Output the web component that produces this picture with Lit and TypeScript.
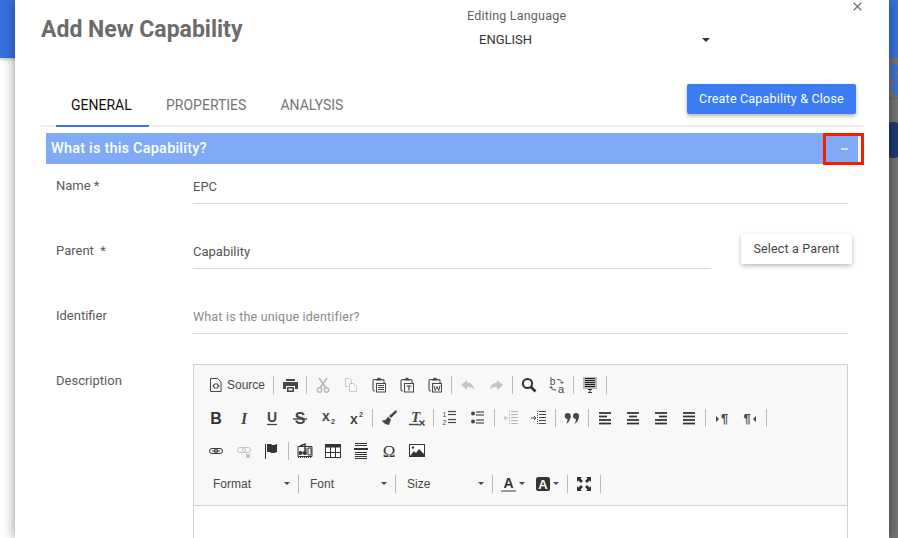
import { LitElement, html, css, svg } from "lit";
import { customElement } from "lit/decorators.js";

const D = "#474747";
const G = "#b9b9b9";
const clip = (inner: unknown) => svg`<path d="M5 2.5H3.5Q2 2.5 2 4v8.5Q2 14 3.5 14H4" fill="none" stroke="${D}" stroke-width="1.1"/><path d="M4.5 3.5V2h2V.8h3V2h2v1.5z" fill="${D}"/><path d="M11 2.5h1Q13 2.5 13 4V6" fill="none" stroke="${D}" stroke-width="1.1"/><rect x="5.5" y="6.5" width="9" height="8.5" fill="#f8f8f8" stroke="${D}"/>${inner}`;
const txt = (t: string, x: number, y: number, size: number, fam: string, extra = "", fill = D) =>
  svg`<text x="${x}" y="${y}" font-size="${size}" font-family="${fam}" text-anchor="middle" fill="${fill}" style="${extra}">${t}</text>`;
const SANS = "Liberation Sans, sans-serif";
const SERIF = "Liberation Serif, serif";
const lines = (rows: [number, number, number][], c = D, w = 2) =>
  rows.map(([x1, x2, y]) => svg`<path d="M${x1} ${y}H${x2}" stroke="${c}" stroke-width="${w}"/>`);

const ICONS: Record<string, unknown> = {
  print: svg`<path d="M4 2h9v2H4z" fill="${D}"/><path d="M1 5h15v7h-3V9H4v3H1z" fill="${D}"/><path d="M5 10h7v5H5z" fill="${D}"/><path d="M6.5 11.5h4v2h-4z" fill="#f8f8f8"/>`,
  cut: svg`<path d="M4 1l7 10M12 1L5 11" stroke="${G}" stroke-width="1.8" fill="none"/><circle cx="4.5" cy="13" r="2.2" fill="none" stroke="${G}" stroke-width="1.4"/><circle cx="11.5" cy="13" r="2.2" fill="none" stroke="${G}" stroke-width="1.4"/>`,
  copy: svg`<path d="M2.5 1.5h4l2 2v3M2.5 1.5v8h3" fill="none" stroke="#c8c8c8"/><path d="M6.5 6.5h4l3 3v5h-7z" fill="none" stroke="#c8c8c8"/>`,
  paste: clip(lines([[7, 13, 8.5], [7, 13, 10.5], [7, 13, 12.5]], D, 1)),
  pastet: clip(svg`<path d="M7.5 9h5M10 9v4.5" stroke="${D}" stroke-width="1.2" fill="none"/>`),
  pastew: clip(svg`<path d="M7 8.5l1.2 5 1.8-4 1.8 4 1.2-5" stroke="${D}" stroke-width="1" fill="none"/>`),
  undo: svg`<path d="M7 3L1 8l6 5v-3q5-.5 7 3 0-7-7-7.5z" fill="#c4c4c4"/>`,
  redo: svg`<path d="M9 3l6 5-6 5v-3q-5-.5-7 3 0-7 7-7.5z" fill="#c4c4c4"/>`,
  find: svg`<circle cx="6.5" cy="6.5" r="4.6" fill="none" stroke="#333" stroke-width="2"/><path d="M10 10l4.5 4.5" stroke="#333" stroke-width="2.6"/>`,
  replace: svg`${txt("b", 3.5, 8, 10, SANS)}${txt("a", 12, 15.5, 11, SANS)}<path d="M8 2.5q5 0 5 3.5M11.5 5l1.5 1.5L14.5 5M7 13q-5 0-5-3.5M.5 11L2 9.5 3.5 11" fill="none" stroke="${D}" stroke-width="1"/>`,
  preview: svg`<rect x="1" y="0" width="14" height="12" fill="#b8b8b8"/>${lines([[3, 13, 1.5], [3, 13, 3.5], [3, 13, 5.5], [3, 13, 7.5], [3, 13, 9.5]], "#222", 1)}<path d="M6 12.5h4M8 12.5v3M6 15.5h4" stroke="#333" stroke-width="1"/>`,
  bold: txt("B", 8, 14, 16, SANS, "font-weight:700", "#333"),
  italic: txt("I", 8, 14, 16, SERIF, "font-weight:700;font-style:italic", "#474747"),
  underline: svg`${txt("U", 8, 12, 14, SANS, "font-weight:700")}<path d="M3 14.5h10" stroke="${D}" stroke-width="1.3"/>`,
  strike: svg`${txt("S", 8, 14, 16, SANS, "font-weight:700")}<path d="M1 9h14" stroke="${D}" stroke-width="1.4"/>`,
  sub: svg`${txt("x", 6, 11, 14, SANS, "font-weight:700")}${txt("2", 13, 14, 7, SANS, "font-weight:700")}`,
  sup: svg`${txt("x", 6, 14, 14, SANS, "font-weight:700")}${txt("2", 13, 7, 7, SANS, "font-weight:700")}`,
  brush: svg`<path d="M15 0l1 2-6 6-2-2z" fill="${D}"/><path d="M7 6.5L10 9.5 8 15C5 15 1 12 1 10.5 4 10.5 6 9 7 6.5z" fill="${D}"/>`,
  clear: svg`${txt("T", 6.5, 12, 15, SERIF, "font-weight:700;font-style:italic")}<path d="M0 14.5h10" stroke="${D}" stroke-width="1.4"/><path d="M10.5 10.5l5 5M15.5 10.5l-5 5" stroke="${D}" stroke-width="1.5"/>`,
  ol: svg`${txt("1", 2.5, 6.5, 7, SANS)}${txt("2", 2.5, 14.5, 7, SANS)}${lines([[6, 14, 1.5], [6, 14, 4.5], [6, 14, 9.5], [6, 14, 12.5]], D, 1.2)}`,
  ul: svg`<circle cx="3" cy="3.5" r="2" fill="${D}"/><circle cx="3" cy="11.5" r="2" fill="${D}"/>${lines([[6, 14, 2], [6, 14, 5], [6, 14, 10], [6, 14, 13]], D, 1.2)}`,
  outdent: svg`${lines([[8, 15, 1.5], [8, 15, 4.5], [8, 15, 7.5], [8, 15, 10.5], [8, 15, 13.5]], G, 1)}<path d="M6.5 1v14" stroke="${G}" stroke-dasharray="1 1"/><path d="M1 8h4M1 8l2-2M1 8l2 2" stroke="${G}" fill="none"/>`,
  indent: svg`${lines([[8, 15, 1.5], [8, 15, 4.5], [8, 15, 7.5], [8, 15, 10.5], [8, 15, 13.5]], D, 1)}<path d="M6.5 1v14" stroke="${D}" stroke-dasharray="1 1"/><path d="M0 8h5M5 8L3 6M5 8l-2 2" stroke="${D}" fill="none"/>`,
  quote: svg`<circle cx="3.7" cy="6" r="3" fill="${D}"/><path d="M6.6 6q0 5-4.6 8 2-3 1.5-6z" fill="${D}"/><circle cx="12" cy="6" r="3" fill="${D}"/><path d="M15 6q0 5-4.6 8 2-3 1.5-6z" fill="${D}"/>`,
  left: lines([[2, 14, 3], [2, 10, 6.5], [2, 14, 10], [2, 14, 13.5]], "#333", 1.8),
  center: lines([[2, 14, 3], [4, 12, 6.5], [2, 14, 10], [2, 14, 13.5]], "#333", 1.8),
  right: lines([[2, 14, 3], [6, 14, 6.5], [2, 14, 10], [2, 14, 13.5]], "#333", 1.8),
  justify: lines([[2, 14, 3], [2, 14, 6.5], [2, 14, 10], [2, 14, 13.5]], "#333", 1.8),
  ltr: svg`<path d="M2 6l3 3-3 3z" fill="${D}"/>${txt("¶", 10.5, 13, 13, SANS, "font-weight:700")}`,
  rtl: svg`${txt("¶", 5, 13, 13, SANS, "font-weight:700")}<path d="M14 6l-3 3 3 3z" fill="${D}"/>`,
  link: svg`<rect x="1.5" y="5.5" width="8" height="5" rx="2.5" fill="none" stroke="#333" stroke-width="1"/><rect x="6.5" y="5.5" width="8" height="5" rx="2.5" fill="none" stroke="#333" stroke-width="1"/><path d="M4 8h8" stroke="#333"/>`,
  unlink: svg`<rect x="1.5" y="4.5" width="8" height="5" rx="2.5" fill="none" stroke="#c4c4c4" stroke-width="1"/><rect x="6.5" y="4.5" width="8" height="5" rx="2.5" fill="none" stroke="#c4c4c4" stroke-width="1"/><path d="M10 11l4 4M14 11l-4 4" stroke="#b0b0b0" stroke-width="1.2"/>`,
  anchor: svg`<path d="M1.5 1v15" stroke="#333" stroke-width="1"/><path d="M3 1h4l1 1h2l3-1v8l-3 1H7L6 9H3z" fill="#333"/>`,
  media: svg`<path d="M1 3.5h14v10H1z" fill="none" stroke="#333"/><path d="M1 14h14" stroke="#333" stroke-width="2" stroke-dasharray="1 1"/><path d="M11 5h3v7h-3zM9 5v7" stroke="#333" fill="none"/><path d="M3 3l5-2v9" stroke="#333" fill="none" stroke-width="1.4"/><circle cx="3.5" cy="10" r="2" fill="#333"/><circle cx="7.5" cy="10" r="2" fill="#333"/>`,
  table: svg`<rect x="0.5" y="1.5" width="15" height="13" fill="#fff" stroke="#333"/><path d="M0 3h16" stroke="#333" stroke-width="3"/><path d="M1 9.5h15M5.5 3v11M10.5 3v11" stroke="#333"/>`,
  hr: svg`${lines([[2, 14, 0.5], [2, 14, 2.5], [2, 14, 9.5], [2, 14, 11.5], [2, 14, 13.5], [2, 14, 15.5]], "#333", 1)}<path d="M1 6h14" stroke="#333" stroke-width="2"/>`,
  omega: txt("Ω", 8, 14, 17, SERIF, "font-weight:400", "#333"),
  image: svg`<rect x="0.5" y="1.5" width="15" height="12" fill="#fff" stroke="#333"/><circle cx="4" cy="4.5" r="1.2" fill="#333"/><path d="M1 13l4-5 2 2 3-4 5 5v2z" fill="#333"/>`,
  maximize: svg`<path d="M1 1h5L4.5 2.5 7 5 5 7 2.5 4.5 1 6zM15 1v5l-1.5-1.5L11 7 9 5l2.5-2.5L10 1zM1 15v-5l1.5 1.5L5 9l2 2-2.5 2.5L6 15zM15 15h-5l1.5-1.5L9 11l2-2 2.5 2.5L15 10z" fill="#333"/>`,
};

const ROW1 = [["print"], ["cut", "copy", "paste", "pastet", "pastew"], ["undo", "redo"], ["find", "replace"], ["preview"]];
const ROW2 = [["bold", "italic", "underline", "strike", "sub", "sup"], ["brush", "clear"], ["ol", "ul"], ["outdent", "indent"], ["quote"], ["left", "center", "right", "justify"], ["ltr", "rtl"]];
const ROW3 = [["link", "unlink", "anchor"]];
const ROW3B = ["media", "table", "hr", "omega", "image"];

@customElement("app-root")
export class AppRoot extends LitElement {
  static styles = css`
    :host { display: block; position: relative; width: 898px; height: 538px; overflow: hidden; background: #fff; font-family: Roboto, sans-serif; }
    .bar { position: absolute; left: 0; top: 0; width: 898px; height: 58px; background: #3673e0; box-shadow: 0 1px 4px rgba(0,0,0,.3); }
    .side { position: absolute; left: 889px; top: 58px; width: 9px; height: 480px; background: #757575; }
    .blob { position: absolute; background: #3a74dc; border-radius: 50%; }
    .b1 { left: 1px; top: 6px; width: 9px; height: 9px; }
    .b2 { left: 1px; top: 15px; width: 8px; height: 8px; }
    .b3 { left: 3px; top: 22px; width: 14px; height: 16px; }
    .rule { position: absolute; left: 0; top: 40px; width: 9px; height: 1px; background: #6a6a6a; }
    .dark { position: absolute; left: -14px; top: 64px; width: 36px; height: 36px; border-radius: 50%; background: #1c3b74; }
    .modal { position: relative; box-sizing: border-box; margin-left: 15px; width: 874px; height: 538px; background: #fff; box-shadow: 0 0 12px rgba(0,0,0,.45); }
    .head { display: flex; height: 84px; }
    h1 { margin: 0; padding: 15px 0 0 26px; width: 452px; box-sizing: border-box; font-size: 23px; line-height: 30px; font-weight: 700; color: #6b6b6b; }
    .lang { width: 250px; padding-top: 8px; }
    .lang-l { font-size: 12.5px; line-height: 15px; color: #5f5f5f; letter-spacing: .2px; }
    .lang-v { display: flex; align-items: center; justify-content: space-between; width: 231px; margin: 9px 0 0 12px; font-size: 13px; line-height: 15px; color: #333; }
    .caret { width: 0; height: 0; border: 4px solid transparent; border-top-color: #333; border-bottom: 0; }
    .x { position: absolute; left: 838px; top: 2px; display: block; }
    .tabline { display: flex; align-items: flex-start; margin-left: 26px; width: 822px; height: 41px; border-bottom: 2px solid #eee; }
    .tab { box-sizing: border-box; height: 43px; padding: 13px 15px 0; font-size: 14px; line-height: 16px; color: #757575; }
    .tab.on { color: #111; border-bottom: 2px solid #3b78e7; margin-left: 15px; width: 93px; }
    .tab + .tab { margin-left: 2px; }
    .tab.p3 { margin-left: 4px; }
    .create { margin-left: auto; margin-right: 7px; width: 169px; height: 30px; border-radius: 2px; background: #3b7cf4; color: #fff; font-size: 12.5px; letter-spacing: .2px; line-height: 30px; text-align: center; box-shadow: 0 2px 4px rgba(0,0,0,.3); }
    .panel { display: flex; justify-content: space-between; align-items: center; box-sizing: border-box; margin: 6px 0 0 31px; width: 812px; height: 31px; padding: 0 10px 0 5px; background: #80aaf6; color: #fff; font-size: 14.5px; font-weight: 500; letter-spacing: .2px; }
    .minus { width: 7px; height: 2px; background: rgba(255,255,255,.65); margin-top: 1px; }
    .red { position: absolute; left: 808px; top: 133px; width: 41px; height: 32px; box-sizing: border-box; border: 3px solid #f51f00; }
    .row { display: flex; margin: 0 0 0 41px; }
    .lbl { width: 137px; font-size: 13px; line-height: 15px; color: #5a5a5a; }
    .val { border-bottom: 1px solid #dcdcdc; box-sizing: border-box; font-size: 13px; line-height: 15px; color: #555; height: 26px; padding-top: 1px; }
    .r1 { margin-top: 14px; }
    .r1 .val { width: 655px; }
    .r2 { position: relative; margin-top: 39px; }
    .r2 .val { width: 518px; }
    .parent { position: absolute; left: 685px; top: -9px; width: 111px; height: 30px; border-radius: 2px; background: #fff; color: #444; font-size: 12.5px; letter-spacing: .15px; line-height: 30px; text-align: center; box-shadow: 0 2px 5px rgba(0,0,0,.28); }
    .r3 { margin-top: 39px; }
    .r3 .val { width: 655px; color: #8a8a8a; font-size: 12.5px; letter-spacing: .2px; }
    .r4 { margin-top: 30px; }
    .r4 .lbl { padding-top: 9px; }
    .editor { box-sizing: border-box; width: 655px; height: 200px; border: 1px solid #d1d1d1; background: #fff; }
    .tools { background: #f8f8f8; border-bottom: 1px solid #d1d1d1; padding: 3px 8px 4px; height: 133px; }
    .trow { display: flex; align-items: center; height: 33px; }
    .btn { display: flex; align-items: center; justify-content: center; width: 28px; height: 33px; }
    .btn svg { display: block; overflow: visible; opacity: .999; }
    .src { display: flex; align-items: center; width: 69px; box-sizing: border-box; padding-left: 6px; height: 33px; font-family: "Liberation Sans", sans-serif; font-size: 12px; color: #474747; gap: 3px; }
    .sep { width: 1px; height: 18px; margin: 0 2px; background: #bcbcbc; }
    .combo { display: flex; align-items: center; justify-content: space-between; box-sizing: border-box; width: 92px; padding: 0 6px 0 9px; font-family: "Liberation Sans", sans-serif; font-size: 12px; color: #484848; }
    .combo.first { width: 94px; padding-left: 11px; }
    .combo .caret, .clr .caret { border-width: 3px; border-bottom: 0; border-top-color: #484848; }
    .clr { display: flex; align-items: center; gap: 3px; height: 33px; box-sizing: border-box; }
    .c1 { width: 36px; padding-left: 6px; }
    .c2 { width: 34px; padding-left: 5px; }
  `;

  private icon(n: string) {
    return html`<span class="btn"><svg width="16" height="16" viewBox="0 0 16 16">${ICONS[n]}</svg></span>`;
  }
  private groups(gs: string[][]) {
    return gs.map((g) => html`${g.map((n) => this.icon(n))}<span class="sep"></span>`);
  }

  render() {
    return html`
      <div class="bar"></div>
      <div class="side">
        <span class="blob b1"></span><span class="blob b2"></span><span class="blob b3"></span>
        <span class="rule"></span><span class="dark"></span>
      </div>
      <div class="modal">
        <svg class="x" width="9" height="9" viewBox="0 0 9 9"><path d="M.7.7l7.6 7.6M8.3.7L.7 8.3" stroke="#777" stroke-width="1.4" fill="none"/></svg>
        <div class="head">
          <h1>Add New Capability</h1>
          <div class="lang">
            <div class="lang-l">Editing Language</div>
            <div class="lang-v"><span>ENGLISH</span><span class="caret"></span></div>
          </div>
        </div>
        <div class="tabline">
          <div class="tab on">GENERAL</div>
          <div class="tab">PROPERTIES</div>
          <div class="tab p3">ANALYSIS</div>
          <div class="create">Create Capability &amp; Close</div>
        </div>
        <div class="panel"><span>What is this Capability?</span><span class="minus"></span></div>
        <div class="red"></div>
        <div class="row r1"><div class="lbl">Name *</div><div class="val">EPC</div></div>
        <div class="row r2"><div class="lbl">Parent&nbsp; *</div><div class="val">Capability</div><div class="parent">Select a Parent</div></div>
        <div class="row r3"><div class="lbl">Identifier</div><div class="val">What is the unique identifier?</div></div>
        <div class="row r4">
          <div class="lbl">Description</div>
          <div class="editor">
            <div class="tools">
              <div class="trow">
                <span class="src"><svg width="16" height="16" viewBox="0 0 16 16"><path d="M2.5 1.5h7l3.5 3.5v9.5H2.5z" fill="#fff" stroke="#474747"/><path d="M7.5 6.5L5 9l2.5 2.5M8.5 6.5L11 9l-2.5 2.5" fill="none" stroke="#474747" stroke-width="1.1"/></svg>Source</span>
                <span class="sep"></span>
                ${this.groups(ROW1)}
              </div>
              <div class="trow">${this.groups(ROW2)}</div>
              <div class="trow">${this.groups(ROW3)}${ROW3B.map((n) => this.icon(n))}</div>
              <div class="trow">
                <span class="combo first"><span>Format</span><span class="caret"></span></span><span class="sep"></span>
                <span class="combo"><span>Font</span><span class="caret"></span></span><span class="sep"></span>
                <span class="combo"><span>Size</span><span class="caret"></span></span><span class="sep"></span>
                <span class="clr c1"><svg width="15" height="16" viewBox="0 0 15 16">${txt("A", 7.5, 12, 14, SANS, "font-weight:700", "#333")}<path d="M0 15h15" stroke="#9a9a9a" stroke-width="2"/></svg><span class="caret"></span></span>
                <span class="clr c2"><svg width="14" height="14" viewBox="0 0 14 14"><rect width="14" height="14" rx="2.5" fill="#333"/>${txt("A", 7, 12, 13, SANS, "font-weight:700", "#f8f8f8")}</svg><span class="caret"></span></span>
                <span class="sep"></span>
                ${this.icon("maximize")}<span class="sep"></span>
              </div>
            </div>
          </div>
        </div>
      </div>
    `;
  }
}
